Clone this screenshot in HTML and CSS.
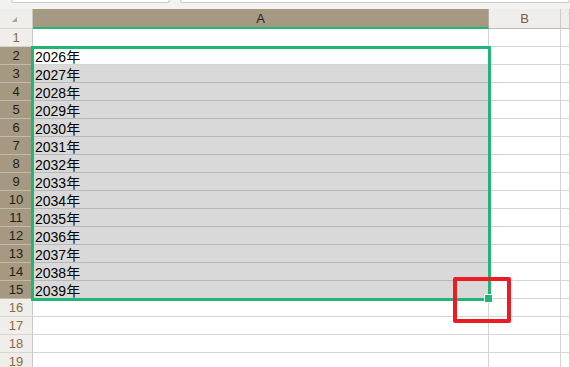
FILE: index.html
```html
<!DOCTYPE html>
<html lang="ja">
<head>
    <meta charset="UTF-8">
    <title>Sheet1</title>
    <link rel="stylesheet" href="styles.css">
</head>
<body>
    <!-- bottom edge of the name box and formula bar -->
    <div class="toolbar">
        <div class="name-box"></div>
        <div class="formula-bar"></div>
    </div>

    <div class="sheet">
        <div class="row head-row">
            <div class="corner"><span class="corner-mark"></span></div>
            <div class="col-head col-a picked">A</div>
            <div class="col-head col-b">B</div>
            <div class="col-head col-c"></div>
        </div>

        <div class="row"><div class="row-head">1</div><div class="cell col-a"></div><div class="cell col-b"></div><div class="cell col-c"></div></div>
        <div class="row"><div class="row-head picked">2</div><div class="cell col-a active">2026年</div><div class="cell col-b"></div><div class="cell col-c"></div></div>
        <div class="row"><div class="row-head picked">3</div><div class="cell col-a shaded">2027年</div><div class="cell col-b"></div><div class="cell col-c"></div></div>
        <div class="row"><div class="row-head picked">4</div><div class="cell col-a shaded">2028年</div><div class="cell col-b"></div><div class="cell col-c"></div></div>
        <div class="row"><div class="row-head picked">5</div><div class="cell col-a shaded">2029年</div><div class="cell col-b"></div><div class="cell col-c"></div></div>
        <div class="row"><div class="row-head picked">6</div><div class="cell col-a shaded">2030年</div><div class="cell col-b"></div><div class="cell col-c"></div></div>
        <div class="row"><div class="row-head picked">7</div><div class="cell col-a shaded">2031年</div><div class="cell col-b"></div><div class="cell col-c"></div></div>
        <div class="row"><div class="row-head picked">8</div><div class="cell col-a shaded">2032年</div><div class="cell col-b"></div><div class="cell col-c"></div></div>
        <div class="row"><div class="row-head picked">9</div><div class="cell col-a shaded">2033年</div><div class="cell col-b"></div><div class="cell col-c"></div></div>
        <div class="row"><div class="row-head picked">10</div><div class="cell col-a shaded">2034年</div><div class="cell col-b"></div><div class="cell col-c"></div></div>
        <div class="row"><div class="row-head picked">11</div><div class="cell col-a shaded">2035年</div><div class="cell col-b"></div><div class="cell col-c"></div></div>
        <div class="row"><div class="row-head picked">12</div><div class="cell col-a shaded">2036年</div><div class="cell col-b"></div><div class="cell col-c"></div></div>
        <div class="row"><div class="row-head picked">13</div><div class="cell col-a shaded">2037年</div><div class="cell col-b"></div><div class="cell col-c"></div></div>
        <div class="row"><div class="row-head picked">14</div><div class="cell col-a shaded">2038年</div><div class="cell col-b"></div><div class="cell col-c"></div></div>
        <div class="row"><div class="row-head picked">15</div><div class="cell col-a shaded">2039年</div><div class="cell col-b"></div><div class="cell col-c"></div></div>
        <div class="row"><div class="row-head">16</div><div class="cell col-a"></div><div class="cell col-b"></div><div class="cell col-c"></div></div>
        <div class="row"><div class="row-head">17</div><div class="cell col-a"></div><div class="cell col-b"></div><div class="cell col-c"></div></div>
        <div class="row"><div class="row-head">18</div><div class="cell col-a"></div><div class="cell col-b"></div><div class="cell col-c"></div></div>
        <div class="row"><div class="row-head">19</div><div class="cell col-a"></div><div class="cell col-b"></div><div class="cell col-c"></div></div>

        <!-- selection A2:A15 and its fill handle -->
        <div class="selection"></div>
        <div class="fill-handle"></div>

        <!-- red callout around the fill handle -->
        <div class="callout"></div>
    </div>
</body>
</html>
```

FILE: styles.css
```css
/* Basic reset */
* {
    margin: 0;
    padding: 0;
    box-sizing: border-box;
}

body {
    width: 570px;
    height: 367px;
    overflow: hidden;
    background: #f2f2f1;
    font-family: "Liberation Sans", "Noto Sans CJK JP", sans-serif;
}

/* Toolbar remains */
.toolbar {
    height: 9px;
    display: flex;
    align-items: flex-start;
}

.name-box,
.formula-bar {
    height: 3px;
    background: #ffffff;
    border: 1px solid #c9c9c9;
    border-top: none;
    border-radius: 0 0 4px 4px;
}

.name-box {
    width: 159px;
    margin-left: 11px;
}

.formula-bar {
    flex: 1;
    margin-left: 10px;
}

/* Grid */
.sheet {
    position: relative;
}

.row {
    display: flex;
    height: 18px;
}

.head-row {
    height: 20px;
}

.col-a {
    width: 456px;
}

.col-b {
    width: 72px;
}

.col-c {
    flex: 1;
}

.corner,
.row-head {
    width: 33px;
    background: #efeeeb;
    border-right: 1px solid #c9c9c6;
    border-bottom: 1px solid #d6d5d2;
}

.corner {
    position: relative;
}

.corner-mark {
    position: absolute;
    left: 12px;
    top: 8px;
    width: 0;
    height: 0;
    border-left: 5px solid transparent;
    border-bottom: 5px solid #a4a4a4;
}

.col-head {
    background: #efeeeb;
    border-right: 1px solid #c9c9c6;
    border-bottom: 1px solid #c0bfbc;
    font-size: 13px;
    color: #7a5a3a;
    text-align: center;
    line-height: 19px;
}

.col-head.picked {
    background: #a59982;
    color: #222222;
    border-bottom: 2px solid #22b573;
    border-right-color: #b7b0a1;
}

.row-head {
    font-size: 13px;
    color: #8a6a45;
    text-align: center;
    line-height: 18px;
}

.row-head.picked {
    background: #a59982;
    color: #242016;
    border-bottom-color: #c2baa9;
}

.cell {
    background: #ffffff;
    border-right: 1px solid #d4d4d4;
    border-bottom: 1px solid #d4d4d4;
    font-size: 14px;
    line-height: 18px;
    padding: 1px 0 0 2px;
    color: #000000;
    white-space: nowrap;
}

.cell.shaded {
    background: #d9d9d9;
    border-bottom-color: #b8b8b8;
}

/* Selection overlay */
.selection {
    position: absolute;
    left: 31px;
    top: 37px;
    width: 460px;
    height: 255px;
    border: 3px solid #22b573;
}

.fill-handle {
    position: absolute;
    left: 484px;
    top: 285px;
    width: 9px;
    height: 9px;
    background: #22b573;
    border: 1px solid #ffffff;
}

.callout {
    position: absolute;
    left: 453px;
    top: 268px;
    width: 58px;
    height: 46px;
    border: 4px solid #ec1c24;
    border-radius: 2px;
}
```
